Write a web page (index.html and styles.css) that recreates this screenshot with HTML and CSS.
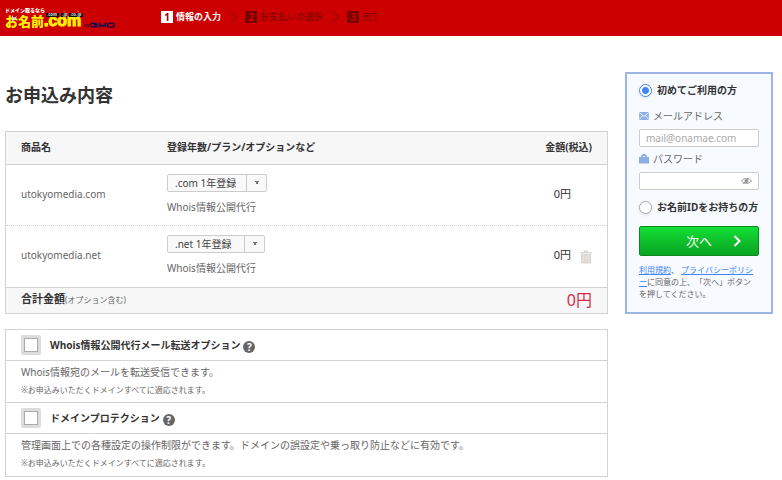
FILE: index.html
```html
<!DOCTYPE html>
<html lang="ja">
<head>
<meta charset="utf-8">
<title>お申込み内容</title>
<link rel="stylesheet" href="styles.css">
</head>
<body>
<header class="header">
  <a class="logo" href="#">
    <svg width="114" height="24" viewBox="0 0 114 24" role="img" aria-label="お名前.com by GMO">
      <text class="logo-tag" x="0" y="6">ドメイン取るなら</text>
      <text class="logo-jp" x="0" y="20">お名前</text>
      <text class="logo-dot" x="39" y="20">.com</text>
      <path class="logo-strip" d="M41 7h13v4H41zM56 7h6v4h-6zM64 7h14v4H64z"/>
      <text class="logo-mini" x="42" y="10">.com</text>
      <text class="logo-mini" x="57" y="10">.jp</text>
      <text class="logo-mini" x="65" y="10">.co.jp</text>
      <path class="logo-shine" d="M7 9l2 3 3-2-2 4-3 1z"/>
      <text class="logo-by" x="79" y="21">by</text>
      <g class="logo-gmo">
        <path d="M92 18C90 16.800 85.500 17 85.200 19C85.500 21.300 90 21.200 92 20.500V19H89"/>
        <path d="M94.500 21.500V17.500L97.500 20.500L100.500 17.500V21.500"/>
        <ellipse cx="105.800" cy="19.200" rx="3.500" ry="1.900"/>
      </g>
    </svg>
  </a>
  <ol class="steps">
    <li class="step current"><span class="num">1</span>情報の入力</li>
    <li class="sep"><svg width="8" height="12" viewBox="0 0 8 12"><path d="M1 0.500L6.500 6L1 11.500"/></svg></li>
    <li class="step"><span class="num">2</span>お支払いの選択</li>
    <li class="sep"><svg width="8" height="12" viewBox="0 0 8 12"><path d="M1 0.500L6.500 6L1 11.500"/></svg></li>
    <li class="step"><span class="num">3</span>完了</li>
  </ol>
</header>
<div class="page">
  <main class="main">
    <h1>お申込み内容</h1>
    <table class="cart">
      <colgroup><col class="c-name"><col><col class="c-price"></colgroup>
      <thead>
        <tr><th scope="col">商品名</th><th scope="col">登録年数/プラン/オプションなど</th><th scope="col" class="right">金額(税込)</th></tr>
      </thead>
      <tbody>
        <tr>
          <td>utokyomedia.com</td>
          <td class="plan">
            <div class="pick"><select class="wide" aria-label="utokyomedia.comの登録年数"><option>.com 1年登録</option></select></div>
            <p>Whois情報公開代行</p>
          </td>
          <td><div class="price">0円<span class="trash"></span></div></td>
        </tr>
        <tr>
          <td>utokyomedia.net</td>
          <td class="plan">
            <div class="pick"><select aria-label="utokyomedia.netの登録年数"><option>.net 1年登録</option></select></div>
            <p>Whois情報公開代行</p>
          </td>
          <td><div class="price">0円<button type="button" class="trash" aria-label="削除">
            <svg width="12" height="14" viewBox="0 0 12 14"><path class="lid" d="M0 2h4V0.500h4V2h4v1.500H0z"/><path class="can" d="M1 4h10v9.500H1z"/><path class="ribs" d="M3.500 5v7M6 5v7M8.500 5v7"/></svg>
          </button></div></td>
        </tr>
      </tbody>
      <tfoot>
        <tr><th scope="row" colspan="2">合計金額<small>(オプション含む)</small></th><td class="total">0円</td></tr>
      </tfoot>
    </table>
    <section class="options">
      <div class="opt-head">
        <input type="checkbox" id="mailfw"><label for="mailfw">Whois情報公開代行メール転送オプション</label><button type="button" class="help" aria-label="ヘルプ">?</button>
      </div>
      <div class="opt-body">
        <p>Whois情報宛のメールを転送受信できます。</p>
        <p class="note">※お申込みいただくドメインすべてに適応されます。</p>
      </div>
      <div class="opt-head">
        <input type="checkbox" id="protect"><label for="protect">ドメインプロテクション</label><button type="button" class="help" aria-label="ヘルプ">?</button>
      </div>
      <div class="opt-body">
        <p>管理画面上での各種設定の操作制限ができます。ドメインの誤設定や乗っ取り防止などに有効です。</p>
        <p class="note">※お申込みいただくドメインすべてに適応されます。</p>
      </div>
    </section>
  </main>
  <aside class="side">
    <form>
      <label class="choice"><input type="radio" name="user" checked>初めてご利用の方</label>
      <label class="field" for="mail">
        <svg width="10" height="8" viewBox="0 0 11 9"><path class="fill" d="M0 0h11v9H0z"/><path class="line" d="M0 0.500L5.500 5L11 0.500M0 8.500L4 4M11 8.500L7 4"/></svg>メールアドレス</label>
      <div class="box"><input type="email" id="mail" placeholder="mail@onamae.com"></div>
      <label class="field" for="pass">
        <svg width="10" height="10" viewBox="0 0 10 10"><path class="fill" d="M0 3h10v6.500H0z"/><path class="shackle" d="M3 3.500V2.500a2 1.500 0 0 1 4 0V3.500"/></svg>パスワード</label>
      <div class="box"><input type="password" id="pass">
        <svg width="11" height="8" viewBox="0 0 11 8"><path class="eye" d="M0.500 4C2.500 0.800 8.500 0.800 10.500 4C8.500 7.200 2.500 7.200 0.500 4z"/><circle class="pupil" cx="5.500" cy="4" r="2"/><path class="eye" d="M2 7L8 0.500"/></svg>
      </div>
      <label class="choice second"><input type="radio" name="user">お名前IDをお持ちの方</label>
      <button class="next" type="submit"><span>次へ</span><svg width="8" height="12" viewBox="0 0 8 12"><path d="M1.500 1L6.500 6L1.500 11"/></svg></button>
      <p class="terms"><a href="#">利用規約</a>、 <a href="#">プライバシーポリシー</a>に同意の上、「次へ」ボタンを押してください。</p>
    </form>
  </aside>
</div>
</body>
</html>
```
FILE: styles.css
```css
* { box-sizing: border-box; }
body, h1, p, ol { margin: 0; padding: 0; }
body {
  background: #fff;
  color: #666;
  font: 10px/14px "Noto Sans", "Noto Sans CJK JP", sans-serif;
}
button, input, select { font: inherit; color: inherit; }

.header {
  display: flex;
  align-items: center;
  height: 36px;
  padding: 0 0 2px 5px;
  background: #c00;
}
.logo { display: flex; width: 156px; padding-top: 2px; }
.logo text { font-family: "Noto Sans CJK JP", sans-serif; font-weight: 900; }
.logo .logo-tag { font-size: 5px; fill: #fff; }
.logo .logo-jp { font-size: 13px; fill: #fff200; }
.logo .logo-dot { font-family: "Liberation Sans", sans-serif; font-size: 16px; fill: #fff200; stroke: #fff200; stroke-width: 1px; }
.logo .logo-mini { font-size: 4px; fill: #ccc; }
.logo .logo-by { font-family: "Liberation Sans", sans-serif; font-size: 5px; font-style: italic; font-weight: 400; fill: #103; }
.logo-strip { fill: #111; }
.logo-shine { fill: #ddd; }
.logo-gmo { fill: none; stroke: #1a0a46; stroke-width: 1.4; }

.steps { display: flex; align-items: center; list-style: none; color: #7a0000; font-size: 9px; }
.step { display: flex; align-items: center; gap: 3px; line-height: 12px; }
.num {
  width: 12px;
  height: 12px;
  background: #7a0000;
  color: #c00;
  font-size: 10px;
  font-weight: 700;
  text-align: center;
}
.current { color: #fff; font-weight: 700; }
.current .num { background: #fff; color: #900; }
.sep { display: flex; padding: 0 7px 0 9px; }
.sep path { fill: none; stroke: #7a0000; }

.page { display: flex; align-items: flex-start; gap: 17px; padding: 36px 9px 3px 5px; }
.main { flex: 1; min-width: 0; }
h1 { padding: 10px 0 23px; color: #333; font-size: 18px; line-height: 26px; }

.cart { width: 100%; border: 1px solid #d3d3d3; border-spacing: 0; table-layout: fixed; }
.c-name { width: 146px; }
.c-price { width: 90px; }
.cart th, .cart td { padding: 0 15px; text-align: left; }
.cart thead th { height: 33px; padding-bottom: 3px; background: #f7f7f7; border-bottom: 1px solid #d3d3d3; color: #333; }
.cart thead .right { text-align: right; }
.cart tbody td { height: 61px; padding-bottom: 2px; border-bottom: 1px dotted #d3d3d3; }
.cart tbody tr:last-child td { height: 62px; padding-bottom: 3px; border-bottom: 1px solid #d3d3d3; }
.plan p { padding-top: 8px; }
.pick { display: flex; }
.pick select {
  width: 98px;
  height: 18px;
  padding: 0 7px;
  appearance: none;
  border: 1px solid #ccc;
  border-radius: 2px;
  background:
    linear-gradient(#777, #777) right 7px top 6px / 4px 1px no-repeat,
    linear-gradient(#777, #777) right 8px top 7px / 2px 2px no-repeat,
    linear-gradient(#ccc, #ccc) right 19px center / 1px 100% no-repeat,
    #f9f9f9;
  color: #444;
  line-height: 16px;
}
.pick .wide { width: 100px; }
.price { display: flex; align-items: center; justify-content: flex-end; gap: 9px; color: #333; font-size: 11px; }
.trash { display: flex; width: 12px; padding: 3px 0 0; border: 0; background: none; }
.lid { fill: #d9d9d9; }
.can { fill: #ddd6d2; }
.ribs { stroke: #eee5e0; }
.cart tfoot th, .cart tfoot td { height: 25px; padding-bottom: 2px; background: #f7f7f7; }
.cart tfoot th { color: #333; font-size: 11px; }
.cart small { color: #666; font-size: 8px; font-weight: 400; }
.cart .total { color: #d22d4a; font-size: 16px; line-height: 22px; text-align: right; }

.options { margin-top: 15px; border: 1px solid #d3d3d3; }
.opt-head { display: flex; align-items: center; height: 31px; padding-left: 15px; border-bottom: 1px solid #d3d3d3; color: #333; font-weight: 700; }
.opt-head input {
  width: 20px;
  height: 20px;
  margin: 0 9px 0 0;
  appearance: none;
  border: 3px solid #dcdcdc;
  border-radius: 2px;
  background: #fff;
  box-shadow: inset 0 0 0 1px #aaa;
}
.help { width: 12px; height: 12px; margin: 4px 0 0 3px; padding: 0; border: 0; border-radius: 50%; background: #666; color: #fff; font-weight: 700; line-height: 12px; }
.opt-body { padding: 4px 15px 6px; }
.opt-body:not(:last-child) { padding-bottom: 5px; border-bottom: 1px solid #d3d3d3; }
.opt-body .note { padding-top: 4px; font-size: 8px; }

.side { width: 148px; padding: 9px 12px 12px; border: 2px solid #9cb5e5; background: #f7faff; }
.choice { display: flex; align-items: center; gap: 5px; color: #333; font-weight: 700; white-space: nowrap; }
.choice input { width: 13px; height: 13px; margin: 0; appearance: none; border: 1px solid #aaa; border-radius: 50%; background: #fff; box-shadow: 0 1px 3px #ddd; }
.choice input:checked { border-color: #4285f4; background: radial-gradient(#4285f4 3px, #fff 4px); }
.second { margin: 10px 0 12px; }
.field { display: flex; align-items: center; gap: 4px; height: 14px; margin: 12px 0 6px; }
.box + .field { margin: 5px 0 6px; }
.fill { fill: #8eaee2; }
.line { fill: none; stroke: #f7faff; }
.shackle { fill: none; stroke: #8eaee2; stroke-width: 2px; }
.box { display: flex; align-items: center; height: 18px; padding: 0 6px; border: 1px solid #ccc; border-radius: 2px; background: #fff; }
.box input { flex: 1; min-width: 0; height: 16px; padding: 0; border: 0; background: none; outline: 0; }
.box input::placeholder { color: #aaa; }
.eye { fill: none; stroke: #999; }
.pupil { fill: #999; }
.next {
  display: grid;
  grid-template-columns: 1fr auto 1fr;
  align-items: center;
  width: 100%;
  height: 30px;
  padding: 0 17px;
  border: 1px solid #0a8a1c;
  border-radius: 2px;
  background: linear-gradient(#12df34, #0aa322);
  color: #fff;
  font-size: 13px;
}
.next span { grid-column: 2; }
.next svg { justify-self: end; }
.next path { fill: none; stroke: #fff; stroke-width: 2px; }
.terms { padding: 8px 3px 0 0; font-size: 8px; line-height: 12px; text-spacing-trim: space-all; }
.terms a { color: #4285f4; }
```
